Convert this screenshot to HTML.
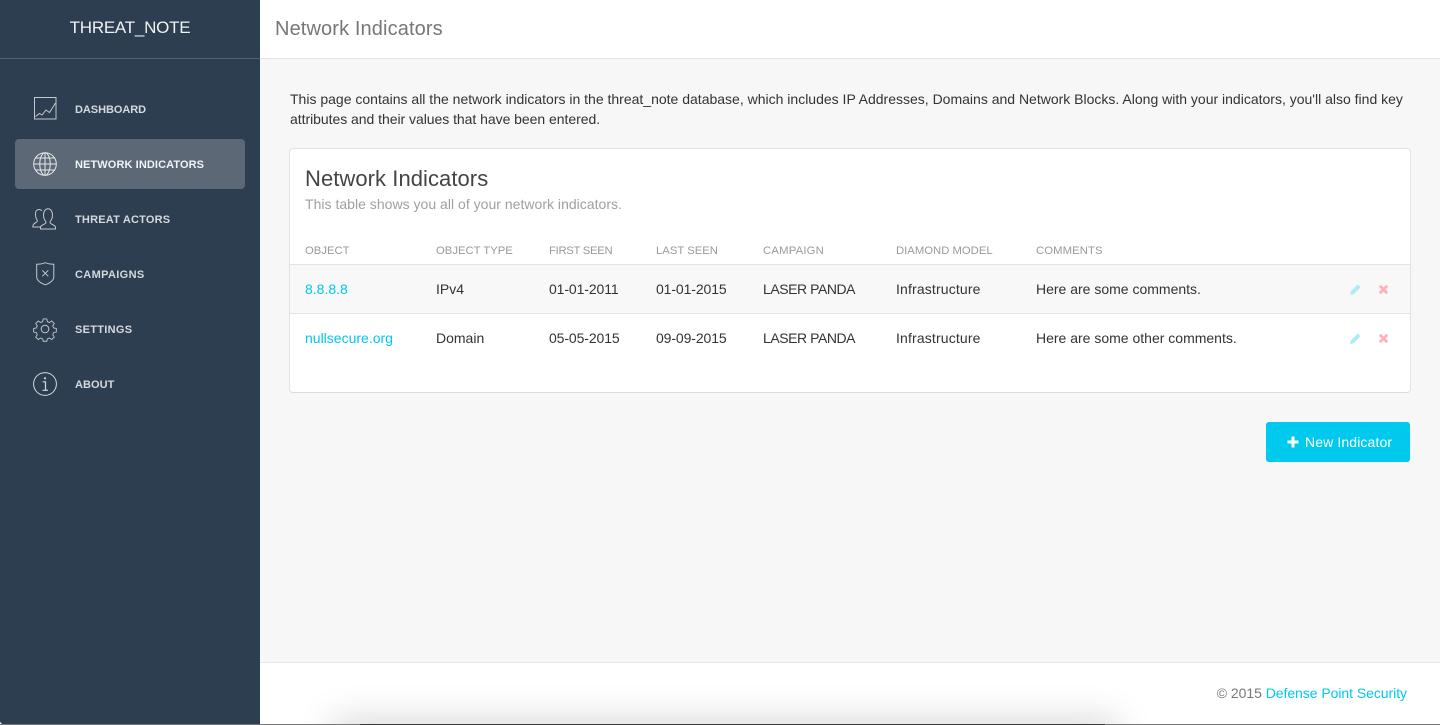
<!DOCTYPE html>
<html><head><meta charset="utf-8"><title>Network Indicators</title>
<style>
*{box-sizing:border-box}
html,body{margin:0;padding:0;width:1440px;height:725px;overflow:hidden;background:#fff;font-family:"Liberation Sans",sans-serif}
#w{position:relative;width:1440px;height:725px;overflow:hidden;background:#fff}
.t{position:absolute;white-space:nowrap;line-height:20px}
.box{position:absolute}
.nav{font-weight:700;font-size:11px;color:#d5d8dc;left:75px;letter-spacing:.05px}
.th{font-size:11.3px;color:#9a9a9a;top:241px}
.td{font-size:14px;color:#333}
.r1{top:279px}.r2{top:328px}
.dt{letter-spacing:-.1px}
.lp{letter-spacing:-.45px}
.inf{letter-spacing:.15px}
a{color:#00c9ee;text-decoration:none}
svg{position:absolute;overflow:visible}
</style></head><body><div id="w">
<div class="box" style="left:260px;top:0;width:1180px;height:59px;background:#fff;border-bottom:1px solid #e3e3e3"></div>
<div class="box" style="left:260px;top:59px;width:1180px;height:603px;background:#f7f7f7"></div>
<div class="box" style="left:260px;top:662px;width:1180px;height:1px;background:#e8e8e8"></div>
<div class="box" style="left:345px;top:732px;width:760px;height:10px;box-shadow:0 0 36px 12px rgba(0,0,0,.17);background:#ccc"></div>

<div class="box" style="left:0;top:0;width:260px;height:724px;background:#2d3e50;border-bottom-left-radius:3px"></div>
<div class="box" style="left:0;top:58px;width:260px;height:1px;background:#54626f"></div>
<div class="t" style="left:0;width:260px;text-align:center;top:18px;font-size:17px;letter-spacing:-.25px;color:#f0f2f4">THREAT_NOTE</div>
<div class="box" style="left:15px;top:139px;width:230px;height:50px;background:#5c6876;border-radius:4px"></div>

<svg style="left:34px;top:97px" width="23" height="23" viewBox="0 0 23 23" fill="none" stroke="#c3c8cd" stroke-width="1"><rect x=".5" y=".5" width="21.500" height="21.500"/><path d="M1.500 19.500l4-3 2.500 1.500 4-5 3.500 2.500L21.500 6"/></svg>
<svg style="left:33px;top:152px" width="24" height="24" viewBox="0 0 24 24" fill="none" stroke="#e6e8ea" stroke-width="1"><circle cx="12" cy="12" r="11.300"/><ellipse cx="12" cy="12" rx="5.200" ry="11.300"/><path d="M12 .7v22.600M2.500 6h19M.7 12h22.600M2.500 18h19"/></svg>
<svg style="left:32px;top:208px" width="26" height="22" viewBox="0 0 26 22" fill="none" stroke="#c3c8cd" stroke-width="1"><path d="M8.500 19H.8c0-3 1.500-3.500 3.700-4.800 1-.6 1-1.700.3-2.700C3.800 10 3.500 8 3.500 6c0-3 1.500-4.500 3.500-4.500 1.200 0 2.200.5 2.800 1.300"/><path d="M8.500 21c-.5-3.300 2-4 4.500-5.300 1.200-.7 1.200-2 .3-3-1.300-1.500-1.800-3.500-1.800-5.700 0-3.600 1.900-6.200 4.500-6.200s4.500 2.600 4.500 6.200c0 2.200-.5 4.200-1.800 5.700-.9 1-.9 2.300.3 3 2.500 1.300 5 2 4.500 5.300z"/></svg>
<svg style="left:35.500px;top:262px" width="20" height="24" viewBox="0 0 20 24" fill="none" stroke="#c3c8cd" stroke-width="1"><path d="M.7 2.300Q5 2.300 9 .8h.5q4 1.500 8.300 1.500V15c0 3-3.500 6-8.500 7.800C4.200 21 .7 18 .7 15z"/><path d="M6.300 8.300l6 6M12.300 8.300l-6 6"/></svg>
<svg style="left:33px;top:317px" width="24" height="24" viewBox="0 0 24 24" fill="none" stroke="#c3c8cd" stroke-width="1"><circle cx="12" cy="12" r="3.800"/><path d="M10 .8h4l.6 3 2.300 1 2.600-1.700 2.800 2.800-1.700 2.600 1 2.300 3 .6v4l-3 .6-1 2.300 1.700 2.600-2.800 2.800-2.600-1.700-2.300 1-.6 2.600h-4l-.6-2.600-2.300-1-2.600 1.700-2.800-2.800 1.700-2.600-1-2.300-3-.6v-4l3-.6 1-2.300-1.700-2.600 2.800-2.800 2.600 1.700 2.300-1z" transform="translate(1.200 1.200) scale(.9)"/></svg>
<svg style="left:33px;top:372px" width="24" height="24" viewBox="0 0 24 24" fill="none" stroke="#d5d8dc" stroke-width="1"><circle cx="12" cy="12" r="11.400"/><path d="M9.700 9.800H12.500V18M9.500 18.300h5.500" stroke-width="1.200"/><circle cx="12" cy="6.300" r="1.100" fill="#d5d8dc" stroke="none"/></svg>

<div class="t nav" style="top:99.500px;letter-spacing:-.05px">DASHBOARD</div>
<div class="t nav" style="top:154.500px;color:#f2f3f5;letter-spacing:.1px">NETWORK INDICATORS</div>
<div class="t nav" style="top:209.500px;letter-spacing:.2px">THREAT ACTORS</div>
<div class="t nav" style="top:264.500px;letter-spacing:.35px">CAMPAIGNS</div>
<div class="t nav" style="top:319.500px;letter-spacing:.3px">SETTINGS</div>
<div class="t nav" style="top:374.500px">ABOUT</div>

<div class="t" style="left:275px;top:19px;font-size:20px;letter-spacing:.12px;color:#777">Network Indicators</div>
<div class="t" style="left:290px;top:89px;font-size:14px;color:#333">This page contains all the network indicators in the threat_note database, which includes IP Addresses, Domains and Network Blocks. Along with your indicators, you'll also find key</div>
<div class="t" style="left:290px;top:109px;font-size:14px;letter-spacing:-.04px;color:#333">attributes and their values that have been entered.</div>

<div class="box" style="left:289px;top:148px;width:1122px;height:245px;background:#fff;border:1px solid #e3e3e3;border-bottom:1px solid #dcdcdc;border-radius:4px"></div>
<div class="t" style="left:305px;top:169px;font-size:22px;letter-spacing:.06px;color:#444">Network Indicators</div>
<div class="t" style="left:305px;top:194px;font-size:14px;letter-spacing:.02px;color:#a0a0a0">This table shows you all of your network indicators.</div>

<div class="t th" style="left:305px">OBJECT</div>
<div class="t th" style="left:436px">OBJECT TYPE</div>
<div class="t th" style="left:549px;letter-spacing:-.3px">FIRST SEEN</div>
<div class="t th" style="left:656px">LAST SEEN</div>
<div class="t th" style="left:763px;letter-spacing:.2px">CAMPAIGN</div>
<div class="t th" style="left:896px">DIAMOND MODEL</div>
<div class="t th" style="left:1036px;letter-spacing:.1px">COMMENTS</div>

<div class="box" style="left:290px;top:264px;width:1120px;height:1px;background:#e3e3e3"></div>
<div class="box" style="left:290px;top:265px;width:1120px;height:48px;background:#f8f8f8"></div>
<div class="box" style="left:290px;top:313px;width:1120px;height:1px;background:#e3e3e3"></div>

<div class="t td r1" style="left:305px"><a>8.8.8.8</a></div>
<div class="t td r1" style="left:436px">IPv4</div>
<div class="t td r1 dt" style="left:549px">01-01-2011</div>
<div class="t td r1 dt" style="left:656px">01-01-2015</div>
<div class="t td r1 lp" style="left:763px">LASER PANDA</div>
<div class="t td r1 inf" style="left:896px">Infrastructure</div>
<div class="t td r1" style="left:1036px">Here are some comments.</div>

<div class="t td r2" style="left:305px"><a>nullsecure.org</a></div>
<div class="t td r2" style="left:436px">Domain</div>
<div class="t td r2 dt" style="left:549px">05-05-2015</div>
<div class="t td r2 dt" style="left:656px">09-09-2015</div>
<div class="t td r2 lp" style="left:763px">LASER PANDA</div>
<div class="t td r2 inf" style="left:896px">Infrastructure</div>
<div class="t td r2" style="left:1036px">Here are some other comments.</div>

<svg style="left:1350px;top:284px" width="11" height="11" viewBox="0 0 11 11"><path d="M7.800.4l2.800 2.800-7 7L0 11l.8-3.600z" fill="#aeeaf8"/></svg>
<svg style="left:1379px;top:285px" width="9" height="9" viewBox="0 0 9 9"><path d="M.8.800l7.400 7.400M8.200.800L.8 8.200" stroke="#ffb0b8" stroke-width="2.800"/></svg>
<svg style="left:1350px;top:333px" width="11" height="11" viewBox="0 0 11 11"><path d="M7.800.4l2.800 2.800-7 7L0 11l.8-3.600z" fill="#aeeaf8"/></svg>
<svg style="left:1379px;top:334px" width="9" height="9" viewBox="0 0 9 9"><path d="M.8.800l7.400 7.400M8.200.800L.8 8.200" stroke="#ffb0b8" stroke-width="2.800"/></svg>

<div class="box" style="left:1266px;top:422px;width:144px;height:40px;background:#00c9ee;border-radius:3px"></div>
<svg style="left:1287px;top:436px" width="12" height="12" viewBox="0 0 12 12"><path d="M6 .5v11M.5 6h11" stroke="#fff" stroke-width="3"/></svg>
<div class="t" style="left:1305px;top:432px;font-size:14px;letter-spacing:.12px;color:#fff">New Indicator</div>

<div class="t" style="right:33px;top:683px;font-size:14px;letter-spacing:-.05px;color:#777">© 2015 <a>Defense Point Security</a></div>

<div class="box" style="left:0;top:724px;width:1440px;height:1px;background:#777"></div>
<div class="box" style="left:360px;top:724px;width:745px;height:1px;background:#3a3a3a"></div>
</div></body></html>
